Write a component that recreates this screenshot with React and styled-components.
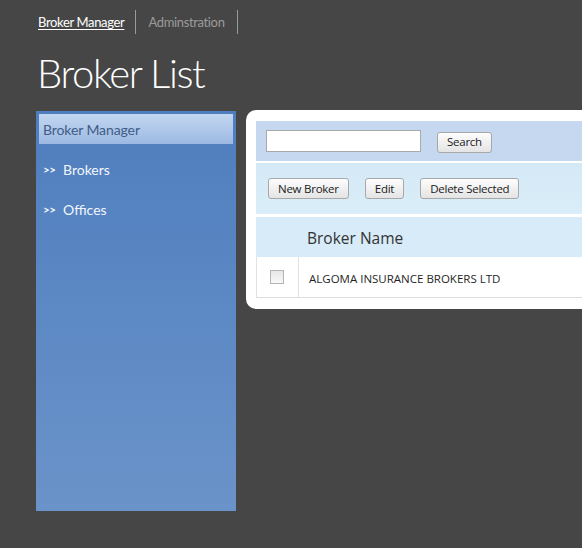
import React from "react";
import styled, { createGlobalStyle } from "styled-components";

const Global = createGlobalStyle`
  html, body { margin: 0; padding: 0; overflow: hidden; }
  body { background: #464646; font-family: "Lato", "Open Sans", sans-serif; }
`;

const Page = styled.div`
  padding: 10px 0 0 36px;
  width: 582px;
  height: 548px;
  box-sizing: border-box;
  overflow: hidden;
`;

const Nav = styled.nav`
  display: flex;
  align-items: stretch;
  height: 24px;
  padding-left: 2px;
`;

const NavLink = styled.a`
  display: flex;
  align-items: center;
  padding: 0 12px;
  border-right: 1px solid #9a9a9a;
  font-family: "Lato", sans-serif;
  font-weight: 400;
  font-size: 13px;
  letter-spacing: -0.35px;
  color: ${(p) => (p.$active ? "#ffffff" : "#9b9b9b")};
  text-decoration: ${(p) => (p.$active ? "underline" : "none")};
  text-underline-offset: 2px;
  &:first-child { padding-left: 0; padding-right: 11px; }
`;

const Title = styled.h1`
  margin: 17px 0 15px 1px;
  font-family: "Lato", sans-serif;
  font-weight: 300;
  font-size: 40px;
  line-height: 44px;
  letter-spacing: -1.4px;
  color: #ffffff;
`;

const Main = styled.div`
  display: flex;
  align-items: flex-start;
  gap: 10px;
`;

const Sidebar = styled.aside`
  flex-shrink: 0;
  width: 200px;
  height: 400px;
  margin-top: 1px;
  box-sizing: border-box;
  padding: 3px;
  background: linear-gradient(#4f7ebe, #6a93c9);
  display: flex;
  flex-direction: column;
`;

const SideHead = styled.div`
  height: 30px;
  display: flex;
  align-items: center;
  padding-left: 4px;
  margin-bottom: 5px;
  background: linear-gradient(#c3d6f0, #9cb9e3);
  color: #3f5c86;
  font-family: "Lato", sans-serif;
  font-size: 14px;
  letter-spacing: -0.1px;
`;

const SideItem = styled.div`
  height: 40px;
  display: flex;
  align-items: center;
  padding-left: 4px;
  color: #f2f6fc;
  font-family: "Lato", sans-serif;
  font-size: 14px;
`;

const Arrow = styled.span`
  font-size: 11.5px;
  font-weight: 700;
  width: 20px;
  letter-spacing: -0.5px;
`;

const Panel = styled.section`
  flex-shrink: 0;
  width: 400px;
  background: #ffffff;
  border-radius: 10px;
  padding: 11px 0 11px 10px;
  display: flex;
  flex-direction: column;
  font-family: "Open Sans", sans-serif;
`;

const SearchBar = styled.div`
  height: 40px;
  background: #c6d8ef;
  display: flex;
  align-items: center;
  gap: 16px;
  padding-left: 10px;
  margin-bottom: 2px;
`;

const SearchInput = styled.input`
  width: 155px;
  height: 22px;
  box-sizing: border-box;
  border: 1px solid #a9a9a9;
  background: #fff;
  padding: 0 4px;
`;

const Btn = styled.button`
  height: 21px;
  padding: 0 9px;
  border: 1px solid #a8a8a8;
  border-radius: 3px;
  background: linear-gradient(#fdfdfd, #e4e4e4);
  font-family: "Open Sans", sans-serif;
  font-size: 11.5px;
  letter-spacing: -0.25px;
  color: #1a1a1a;
  line-height: 18px;
  margin-top: ${(p) => p.$offset || 0}px;
`;

const Toolbar = styled.div`
  height: 51px;
  background: linear-gradient(#d4e9f6, #daeef9);
  display: flex;
  align-items: center;
  gap: 16px;
  padding-left: 12px;
  margin-bottom: 3px;
`;

const Table = styled.div`
  display: flex;
  flex-direction: column;
`;

const HeadRow = styled.div`
  height: 40px;
  background: #d8ebf8;
  display: flex;
  align-items: center;
`;

const Row = styled.div`
  height: 41px;
  display: flex;
  align-items: stretch;
  border-left: 1px solid #e2e2e2;
  border-bottom: 1px solid #dcdcdc;
  box-sizing: border-box;
`;

const CheckCell = styled.div`
  width: 41px;
  display: flex;
  align-items: center;
  justify-content: center;
  border-right: ${(p) => (p.$lined ? "1px solid #e2e2e2" : "none")};
`;

const HeadCell = styled.div`
  padding-left: 10px;
  font-size: 15.5px;
  color: #333333;
  margin-top: 2px;
`;

const Cell = styled.div`
  display: flex;
  align-items: center;
  padding-left: 10px;
  font-size: 11.5px;
  color: #1f1f1f;
  padding-top: 2px;
`;

const Box = styled.span`
  width: 12px;
  height: 12px;
  border: 1px solid #b5b5b5;
  background: linear-gradient(#e6e6e6, #f8f8f8);
  margin-left: -1px;
`;

export default function App() {
  return (
    <>
      <Global />
      <Page>
        <Nav>
          <NavLink $active>Broker Manager</NavLink>
          <NavLink>Adminstration</NavLink>
        </Nav>
        <Title>Broker List</Title>
        <Main>
          <Sidebar>
            <SideHead>Broker Manager</SideHead>
            <SideItem><Arrow>&gt;&gt;</Arrow>Brokers</SideItem>
            <SideItem><Arrow>&gt;&gt;</Arrow>Offices</SideItem>
          </Sidebar>
          <Panel>
            <SearchBar>
              <SearchInput />
              <Btn $offset={2}>Search</Btn>
            </SearchBar>
            <Toolbar>
              <Btn>New Broker</Btn>
              <Btn>Edit</Btn>
              <Btn>Delete Selected</Btn>
            </Toolbar>
            <Table>
              <HeadRow>
                <CheckCell />
                <HeadCell>Broker Name</HeadCell>
              </HeadRow>
              <Row>
                <CheckCell $lined><Box /></CheckCell>
                <Cell>ALGOMA INSURANCE BROKERS LTD</Cell>
              </Row>
            </Table>
          </Panel>
        </Main>
      </Page>
    </>
  );
}
